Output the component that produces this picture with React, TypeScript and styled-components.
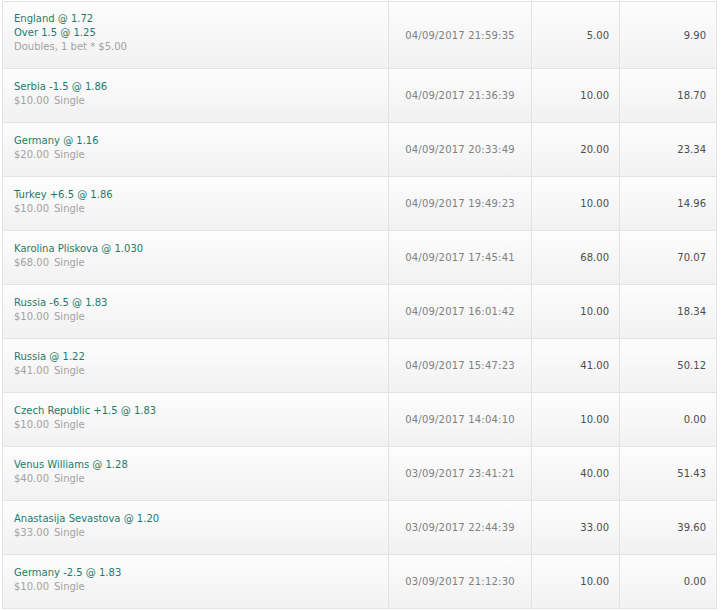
import React from 'react';
import styled, {createGlobalStyle} from 'styled-components';

const GlobalStyle = createGlobalStyle`
  body {
    margin: 0;
    background: #ffffff;
    font-family: 'DejaVu Sans', Verdana, sans-serif;
  }
`

const Wrapper = styled.div`
  padding: 1px 0 0 2px;
`

const Table = styled.table`
  border-collapse: collapse;
  table-layout: fixed;
  width: 715px;
  font-size: 10px;
  line-height: 14px;
`

const Row = styled.tr`
  background: linear-gradient(to bottom, #fdfdfd 0%, #f1f1f1 100%);
`

const Cell = styled.td`
  border: 1px solid #e3e3e3;
  vertical-align: middle;
  padding: 0 10px;
`

const SelectionCell = styled(Cell)<{ $lines: number }>`
  padding: ${p => p.$lines > 2 ? '10px' : '11px'} 11px 14px 11px;
`

const Pick = styled.div`
  color: #1f7a6b;
`

const Meta = styled.div`
  color: #a3a3a3;
`

const BetType = styled.span`
  margin-left: 5px;
`

const DateCell = styled(Cell)`
  text-align: center;
  color: #808080;
  letter-spacing: 0.2px;
  padding-top: 1px;
`

const NumberCell = styled(Cell)`
  text-align: right;
  color: #4d4d4d;
  padding-top: 1px;
`

type Bet = {
    picks: string[]
    amount: string
    type?: string
    date: string
    stake: string
    ret: string
}

const bets: Bet[] = [
    {picks: ['England @ 1.72', 'Over 1.5 @ 1.25'], amount: 'Doubles, 1 bet * $5.00', date: '04/09/2017 21:59:35', stake: '5.00', ret: '9.90'},
    {picks: ['Serbia -1.5 @ 1.86'], amount: '$10.00', type: 'Single', date: '04/09/2017 21:36:39', stake: '10.00', ret: '18.70'},
    {picks: ['Germany @ 1.16'], amount: '$20.00', type: 'Single', date: '04/09/2017 20:33:49', stake: '20.00', ret: '23.34'},
    {picks: ['Turkey +6.5 @ 1.86'], amount: '$10.00', type: 'Single', date: '04/09/2017 19:49:23', stake: '10.00', ret: '14.96'},
    {picks: ['Karolina Pliskova @ 1.030'], amount: '$68.00', type: 'Single', date: '04/09/2017 17:45:41', stake: '68.00', ret: '70.07'},
    {picks: ['Russia -6.5 @ 1.83'], amount: '$10.00', type: 'Single', date: '04/09/2017 16:01:42', stake: '10.00', ret: '18.34'},
    {picks: ['Russia @ 1.22'], amount: '$41.00', type: 'Single', date: '04/09/2017 15:47:23', stake: '41.00', ret: '50.12'},
    {picks: ['Czech Republic +1.5 @ 1.83'], amount: '$10.00', type: 'Single', date: '04/09/2017 14:04:10', stake: '10.00', ret: '0.00'},
    {picks: ['Venus Williams @ 1.28'], amount: '$40.00', type: 'Single', date: '03/09/2017 23:41:21', stake: '40.00', ret: '51.43'},
    {picks: ['Anastasija Sevastova @ 1.20'], amount: '$33.00', type: 'Single', date: '03/09/2017 22:44:39', stake: '33.00', ret: '39.60'},
    {picks: ['Germany -2.5 @ 1.83'], amount: '$10.00', type: 'Single', date: '03/09/2017 21:12:30', stake: '10.00', ret: '0.00'},
]

function App() {
    return (
        <>
            <GlobalStyle/>
            <Wrapper>
                <Table>
                    <colgroup>
                        <col style={{width: 386}}/>
                        <col style={{width: 143}}/>
                        <col style={{width: 88}}/>
                        <col style={{width: 97}}/>
                    </colgroup>
                    <tbody>
                    {bets.map((bet, i) => (
                        <Row key={i}>
                            <SelectionCell $lines={bet.picks.length + 1}>
                                {bet.picks.map(p => <Pick key={p}>{p}</Pick>)}
                                <Meta>
                                    {bet.amount}
                                    {bet.type && <BetType>{bet.type}</BetType>}
                                </Meta>
                            </SelectionCell>
                            <DateCell>{bet.date}</DateCell>
                            <NumberCell>{bet.stake}</NumberCell>
                            <NumberCell>{bet.ret}</NumberCell>
                        </Row>
                    ))}
                    </tbody>
                </Table>
            </Wrapper>
        </>
    );
}

export default App;
